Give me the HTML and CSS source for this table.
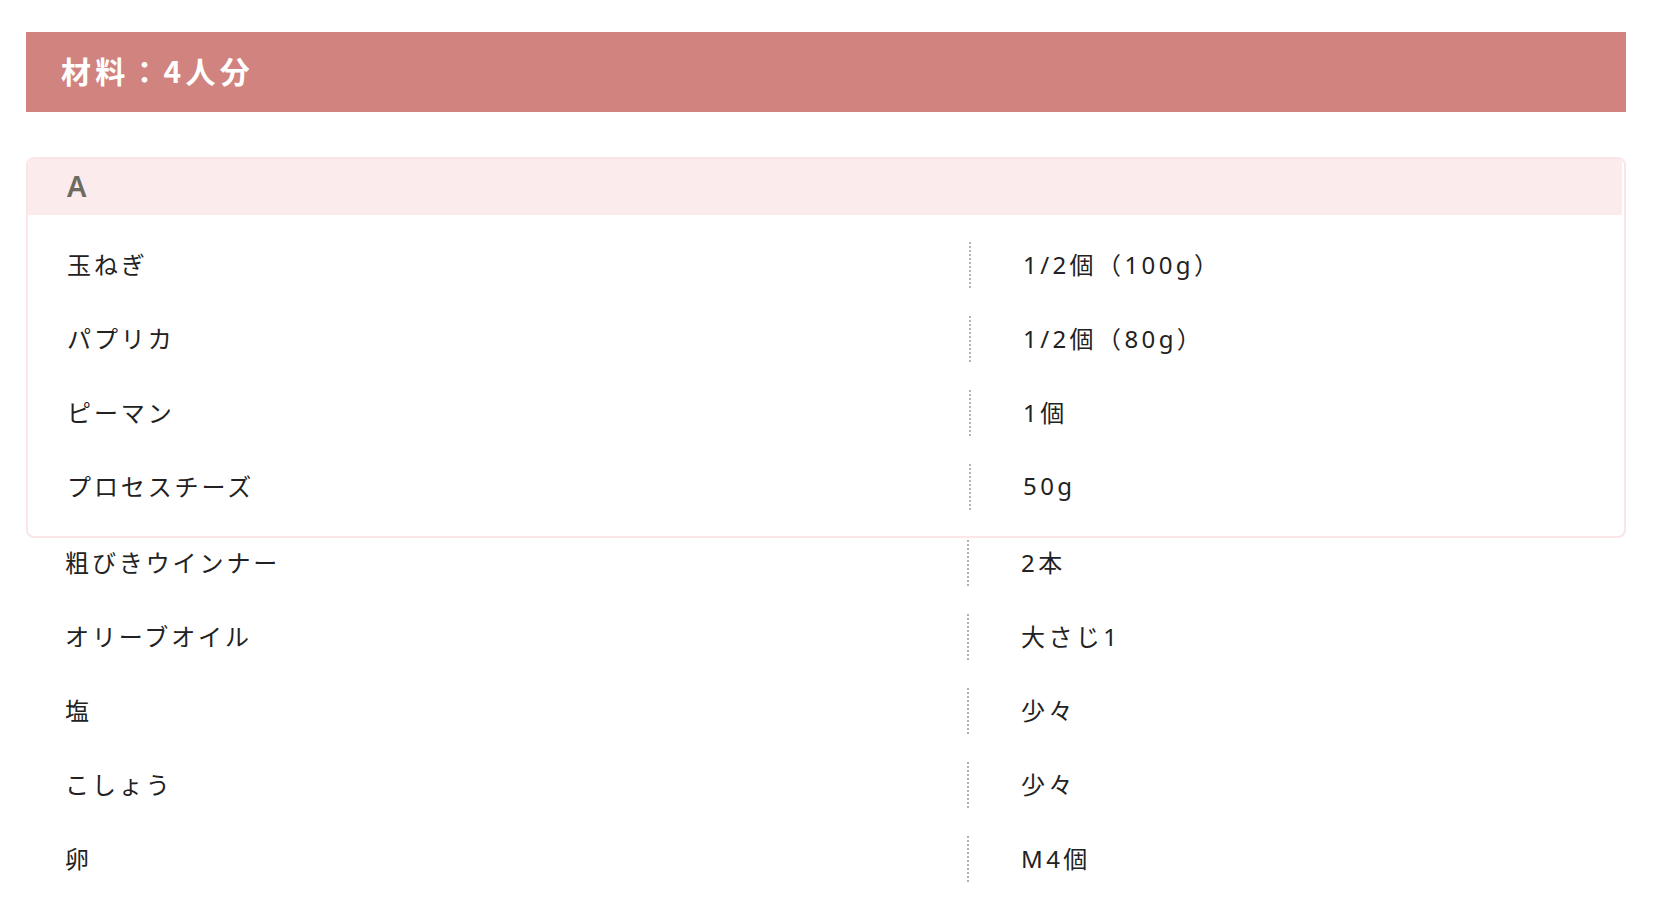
FILE: index.html
```html
<!DOCTYPE html>
<html lang="ja">
<head>
<meta charset="utf-8">
<title>材料</title>
<link rel="stylesheet" href="styles.css">
</head>
<body>
<div class="page">
  <h2 class="title">材料：4人分</h2>
  <div class="group">
    <div class="group-head">A</div>
    <div class="group-body">
      <div class="row"><div class="name">玉ねぎ</div><div class="amount">1/2個（100g）</div></div>
      <div class="row"><div class="name">パプリカ</div><div class="amount">1/2個（80g）</div></div>
      <div class="row"><div class="name">ピーマン</div><div class="amount">1個</div></div>
      <div class="row"><div class="name">プロセスチーズ</div><div class="amount">50g</div></div>
    </div>
  </div>
  <div class="list">
    <div class="row"><div class="name">粗びきウインナー</div><div class="amount">2本</div></div>
    <div class="row"><div class="name">オリーブオイル</div><div class="amount">大さじ1</div></div>
    <div class="row"><div class="name">塩</div><div class="amount">少々</div></div>
    <div class="row"><div class="name">こしょう</div><div class="amount">少々</div></div>
    <div class="row"><div class="name">卵</div><div class="amount">M4個</div></div>
  </div>
</div>
</body>
</html>
```

FILE: styles.css
```css
html, body {
  margin: 0;
  padding: 0;
  background: #ffffff;
}

body {
  font-family: "Noto Sans CJK JP", "Noto Sans", sans-serif;
  color: #222222;
}

.page {
  padding: 32px 36px 0 26px;
  width: 1600px;
}

.title {
  margin: 0;
  height: 80px;
  box-sizing: border-box;
  padding: 0 0 4px 35px;
  display: flex;
  align-items: center;
  background: #d0837f;
  color: #ffffff;
  font-size: 30px;
  font-weight: 700;
  letter-spacing: 4.2px;
}

.group {
  margin-top: 45px;
  border: 2px solid #fbe5e7;
  border-radius: 8px;
  overflow: hidden;
}

.group-head {
  height: 56px;
  box-sizing: border-box;
  padding: 0 0 4px 39px;
  display: flex;
  align-items: center;
  margin-right: 2px;
  background: #fbebed;
  color: #6d6b60;
  font-family: "Noto Sans", "Noto Sans CJK JP", sans-serif;
  font-size: 29px;
  font-weight: 600;
}

.group-body {
  padding: 27px 0 26px;
  display: flex;
  flex-direction: column;
  gap: 28px;
}

.list {
  margin-top: 2px;
  display: flex;
  flex-direction: column;
  gap: 28px;
}

.row {
  display: grid;
  grid-template-columns: 941px 1fr;
  height: 46px;
  font-size: 24px;
}

.name {
  padding: 0 0 4px 39px;
  display: flex;
  align-items: center;
  letter-spacing: 2.9px;
}

.amount {
  border-left: 2px dotted #b6b2a6;
  padding: 0 0 4px 52px;
  display: flex;
  align-items: center;
  font-family: "Noto Sans", "Noto Sans CJK JP", sans-serif;
  letter-spacing: 3.4px;
}
```
